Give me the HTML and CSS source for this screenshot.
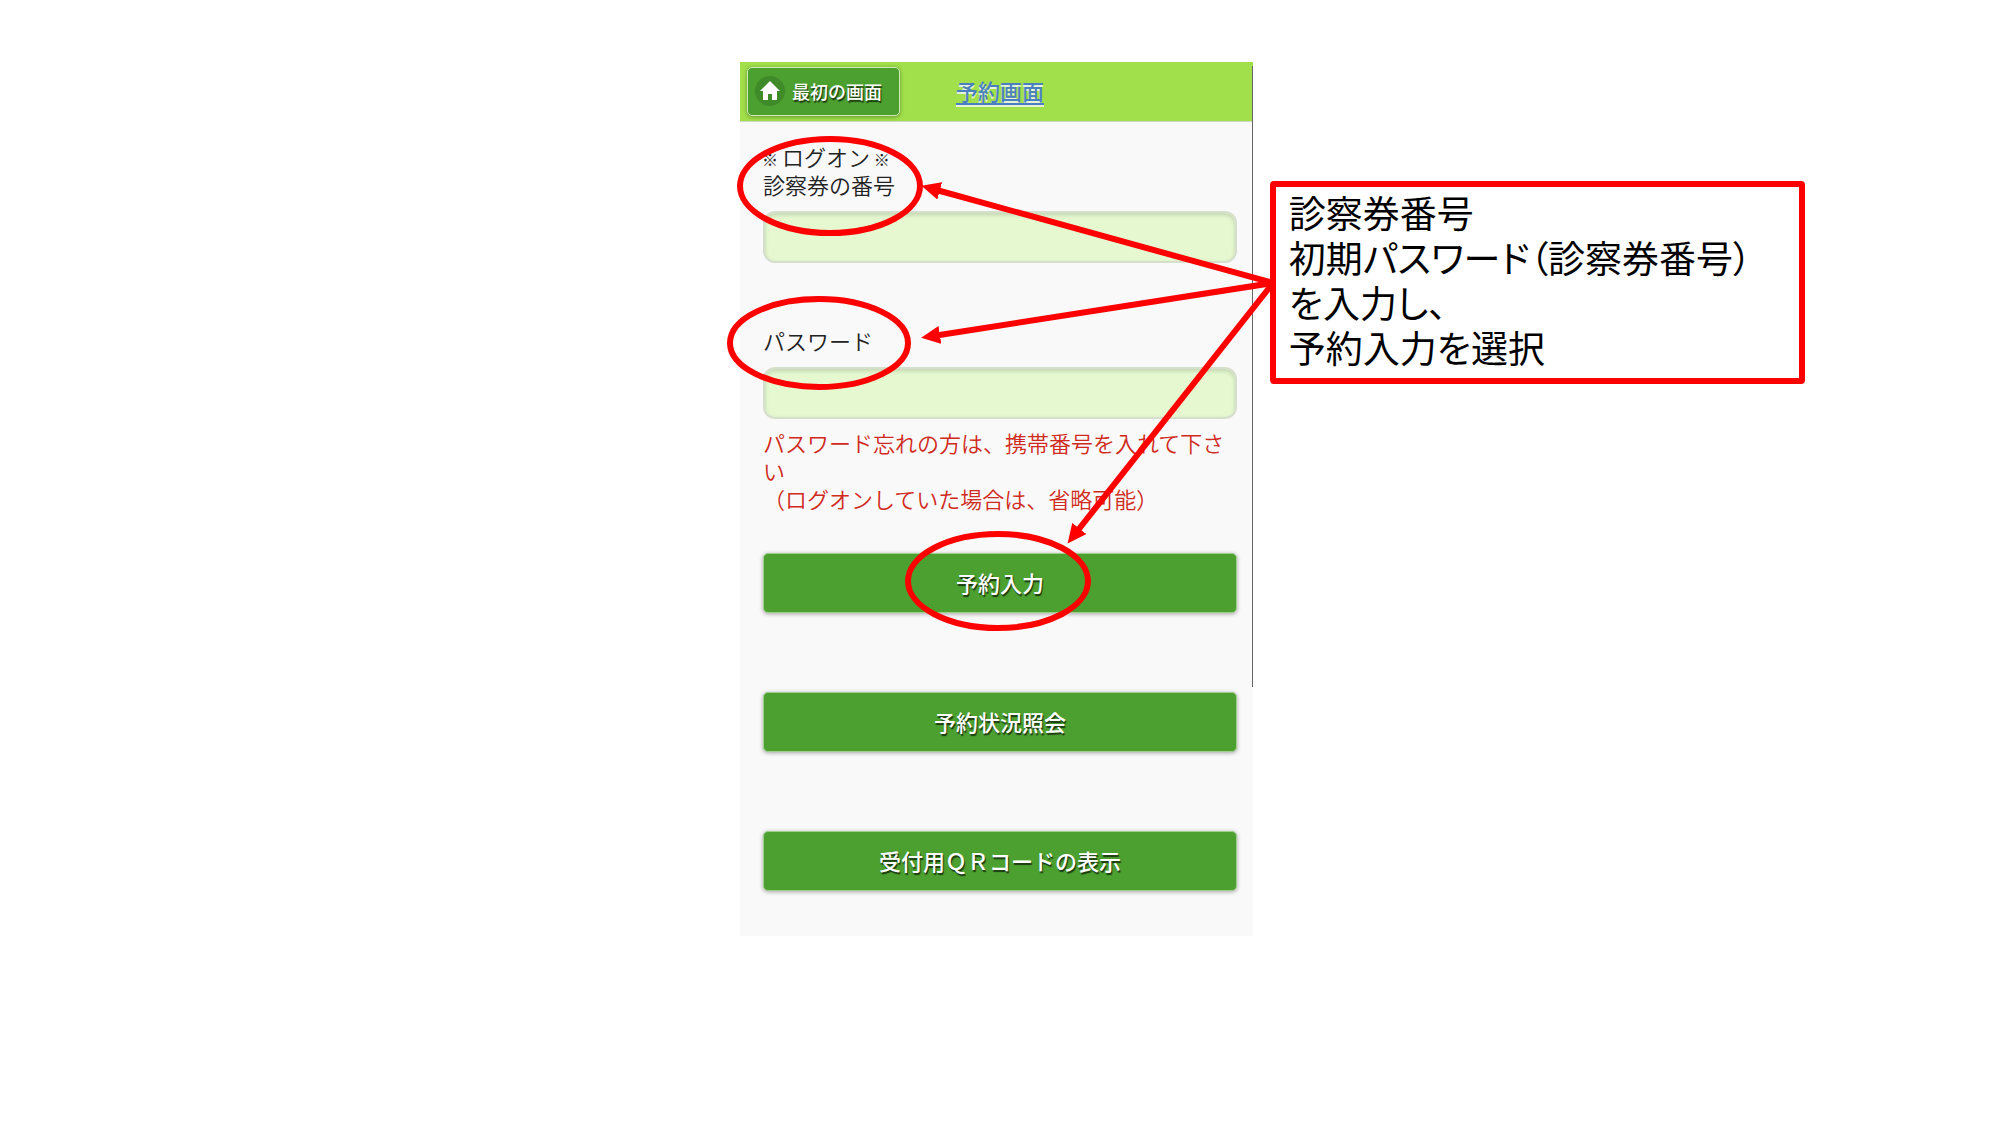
FILE: index.html
```html
<!DOCTYPE html>
<html lang="ja">
<head>
    <meta charset="UTF-8">
    <meta name="viewport" content="width=device-width, initial-scale=1.0">
    <title>予約画面</title>
    <link rel="stylesheet" href="styles.css">
</head>
<body>
<div class="slide">
    <div class="phone">
        <header>
            <button class="home" type="button">
                <svg class="home-icon" viewBox="0 0 30 30" aria-hidden="true">
                    <circle cx="15" cy="15" r="15" fill="#3f8a29"/>
                    <path d="M15 5 L25 15 H22 V24 H17 V18 H13 V24 H8 V15 H5 Z" fill="#fff"/>
                </svg>
                最初の画面
            </button>
            <h1><a href="#">予約画面</a></h1>
        </header>
        <form>
            <label for="card"><span class="kome">※</span> ログオン <span class="kome">※</span><br>診察券の番号</label>
            <input id="card" type="text">
            <label class="second" for="pass">パスワード</label>
            <input id="pass" type="password">
            <p class="note">パスワード忘れの方は、携帯番号を入れて下さい<br>（ログオンしていた場合は、省略可能）</p>
            <div class="buttons">
                <button type="button">予約入力</button>
                <button type="button">予約状況照会</button>
                <button type="button">受付用ＱＲコードの表示</button>
            </div>
        </form>
        <div class="scrollbar"></div>
    </div>

    <p class="callout">診察券番号<br>初期パスワード（診察券番号）<br>を入力し、<br>予約入力を選択</p>

    <!-- circles and arrows over the phone screen -->
    <svg class="marks" aria-hidden="true">
        <defs>
            <marker id="head" markerUnits="userSpaceOnUse" markerWidth="20" markerHeight="18" refX="7" refY="9" orient="auto">
                <path d="M0 0 L19 9 L0 18 Z" fill="#f00"/>
            </marker>
        </defs>
        <ellipse cx="41.5%" cy="186" rx="90" ry="47"/>
        <ellipse cx="40.95%" cy="343" rx="89" ry="44"/>
        <ellipse cx="49.9%" cy="581" rx="90" ry="47"/>
        <line x1="63.65%" y1="283" x2="46.65%" y2="189" marker-end="url(#head)"/>
        <line x1="63.65%" y1="283" x2="46.65%" y2="336" marker-end="url(#head)"/>
        <line x1="63.65%" y1="283" x2="53.75%" y2="534" marker-end="url(#head)"/>
    </svg>
</div>
</body>
</html>
```

FILE: styles.css
```css
* {
    box-sizing: border-box;
}

body {
    margin: 0;
    background-color: white;
    font-family: "Noto Sans CJK JP", sans-serif;
}

.slide {
    position: relative;
    display: flex;
    align-items: flex-start;
    padding-top: 62px;
    padding-left: 37%;
}

.phone {
    position: relative;
    flex: none;
    width: 40.7%;
    padding-bottom: 45px;
    background-color: #f9f9f9;
}

header {
    display: grid;
    grid-template-columns: 1fr auto 1fr;
    align-items: center;
    height: 60px;
    padding-left: 7px;
    background-color: #a1e04a;
    border-bottom: 1px solid #cfd8c0;
}

h1 {
    margin: 0;
    padding-bottom: 4px;
    font-size: 22px;
    line-height: 28px;
    font-weight: 500;
}

h1 a {
    color: #4a80c0;
    text-shadow: 0 2px 0 #e4f3d8;
    text-underline-offset: 3px;
}

button {
    padding: 0 12px 2px;
    font-family: inherit;
    font-weight: 500;
    color: white;
    background-color: #4ca030;
    text-shadow: 1px 2px 1px #1c3a10;
    border: 1px solid #9fd08c;
    border-radius: 5px;
    box-shadow: 0 1px 4px rgba(0, 0, 0, 0.35);
}

.home {
    justify-self: start;
    display: flex;
    align-items: center;
    gap: 7px;
    height: 49px;
    padding: 0 17px 2px 7px;
    font-size: 18px;
    white-space: nowrap;
    border-color: #cdeab8;
}

.home-icon {
    width: 30px;
    height: 30px;
}

form {
    padding: 20px 16px 0 23px;
}

label {
    display: block;
    margin-bottom: 13px;
    font-size: 22px;
    line-height: 28px;
    font-weight: 350;
    color: #222;
}

.second {
    margin-top: 63px;
}

.kome {
    margin: 0 -1px;
    font-size: 16px;
    line-height: 1;
    font-weight: 500;
}

input {
    display: block;
    width: 100%;
    height: 52px;
    padding: 0 12px;
    font-size: 22px;
    background-color: #e5f8d0;
    border: 2px solid #d6dfcc;
    border-radius: 12px;
    box-shadow: inset 0 2px 4px rgba(0, 0, 0, 0.15);
}

.note {
    margin: 9px 0 41px;
    font-size: 22px;
    line-height: 28px;
    font-weight: 350;
    color: #d02a20;
}

.buttons {
    display: flex;
    flex-direction: column;
    gap: 79px;
}

.buttons button {
    height: 60px;
    font-size: 22px;
}

.scrollbar {
    position: absolute;
    top: 4px;
    right: 0;
    width: 1px;
    height: 621px;
    background-color: #666;
}

.callout {
    flex: none;
    width: 42.5%;
    margin: 119px 0 0 17px;
    padding: 3px 13px 8px;
    font-size: 37px;
    line-height: 45px;
    font-feature-settings: "palt";
    color: black;
    background-color: white;
    border: 6px solid #f00;
    border-radius: 4px;
}

.marks {
    position: absolute;
    top: 0;
    left: 0;
    width: 100%;
    height: 100%;
    fill: none;
    stroke: #f00;
    stroke-width: 6px;
    pointer-events: none;
}

.marks marker {
    stroke: none;
}
```
